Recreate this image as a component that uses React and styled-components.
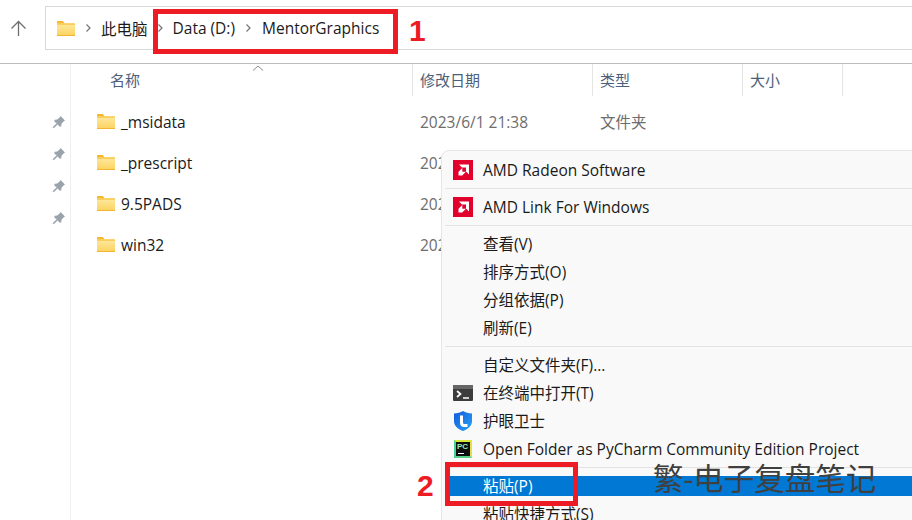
import React from 'react';
import styled, {createGlobalStyle} from 'styled-components';

const UI_FONT = `"Open Sans", "Noto Sans CJK SC", sans-serif`;

const GlobalStyle = createGlobalStyle`
  html, body {
    margin: 0;
    padding: 0;
    background: #fff;
  }
  body {
    font-family: ${UI_FONT};
  }
`;

const Page = styled.div`
  position: relative;
  width: 912px;
  height: 520px;
  overflow: hidden;
  background: #fff;
  color: #1a1a1a;
`;

const Toolbar = styled.div`
  display: flex;
  align-items: flex-start;
  height: 64px;
  box-sizing: border-box;
  padding: 6px 0 0 10px;
  border-bottom: 1px solid #bdbdbd;
`;

const BackButton = styled.div`
  display: flex;
  width: 35px;
  flex: none;
  margin-top: 14px;
`;

const AddressBar = styled.div`
  display: flex;
  align-items: center;
  flex: 1;
  height: 44px;
  box-sizing: border-box;
  padding-left: 11px;
  border: 1px solid #d9d9d9;
  border-right: 0;
  font-size: 15.5px;
`;

const Crumb = styled.span`
  margin-right: ${p => p.$gap || 0}px;
  white-space: nowrap;
`;

const AddressFolder = styled.span`
  display: flex;
  margin-right: 10px;
`;

const Chevron = styled.svg`
  width: 6px;
  height: 10px;
  flex: none;
  margin-right: ${p => p.$gap}px;
`;

const Body = styled.div`
  display: flex;
  height: 456px;
`;

const NavRail = styled.div`
  display: flex;
  flex-direction: column;
  align-items: center;
  gap: 16px;
  width: 71px;
  box-sizing: border-box;
  padding: 50px 0 0 47px;
  border-right: 1px solid #f0f0f0;
`;

const FileArea = styled.div`
  flex: 1;
`;

const HeaderRow = styled.div`
  display: grid;
  grid-template-columns: 342px 180px 150px 100px 1fr;
  height: 32px;
`;

const HeaderCell = styled.div`
  position: relative;
  display: flex;
  align-items: center;
  box-sizing: border-box;
  padding: 0 0 2px ${p => p.$pad || 7}px;
  border-right: 1px solid #e5e5e5;
  font-size: 15px;
  color: #4c607a;
  &:last-child {
    border-right: 0;
  }
`;

const SortCaret = styled.svg`
  position: absolute;
  left: 181px;
  top: 1px;
  width: 12px;
  height: 6px;
`;

const FileList = styled.div`
  padding-top: 5px;
`;

const FileRow = styled.div`
  display: grid;
  grid-template-columns: 342px 180px 150px;
  align-items: center;
  height: 41px;
`;

const FileName = styled.div`
  display: flex;
  align-items: center;
  gap: 6px;
  padding-left: 26px;
  font-size: 15.5px;
  color: #1a1a1a;
`;

const FileMeta = styled.div`
  padding-left: 7px;
  font-size: 15.5px;
  color: #6d6d6d;
  white-space: nowrap;
`;

const Menu = styled.div`
  position: absolute;
  left: 441px;
  top: 150px;
  width: 480px;
  height: 380px;
  box-sizing: border-box;
  padding-top: 1px;
  background: #f9f9f9;
  border: 1px solid #e6e6e6;
  border-radius: 8px 0 0 0;
  font-size: 15.5px;
  color: #1a1a1a;
`;

const MenuItem = styled.div`
  display: flex;
  align-items: center;
  height: ${p => p.$h || 28}px;
  padding-left: 11px;
`;

const ActiveItem = styled(MenuItem)`
  height: 20px;
  margin: 8px 0 3px 8px;
  padding-left: 3px;
  background: #0078d4;
  color: #fff;
`;

const MenuIcon = styled.div`
  display: flex;
  align-items: center;
  justify-content: center;
  width: 20px;
  height: 20px;
  flex: none;
  margin-right: 10px;
`;

const MenuSpacer = styled.div`
  width: 20px;
  flex: none;
  margin-right: 10px;
`;

const MenuLabel = styled.span`
  white-space: nowrap;
  margin-bottom: ${p => (p.$lift ? 2 : 0)}px;
`;

const Divider = styled.div`
  height: 1px;
  margin: ${p => p.$top}px 0 ${p => p.$bottom}px 3px;
  background: #e3e3e3;
`;

const PcIcon = styled.div`
  position: relative;
  width: 18px;
  height: 18px;
  box-sizing: border-box;
  border: 2px solid;
  border-color: #d7e83a #e5e04a #57d08a #3ed49c;
  background: #0d0d0d;
  color: #8ef0b8;
  font: 700 8px/9px "Liberation Sans", sans-serif;
  padding-left: 1px;
  &::after {
    content: '';
    position: absolute;
    left: 2px;
    bottom: 2px;
    width: 6px;
    height: 1px;
    background: #fff;
  }
`;

const RedBox = styled.div`
  position: absolute;
  left: ${p => p.$x}px;
  top: ${p => p.$y}px;
  width: ${p => p.$w}px;
  height: ${p => p.$h}px;
  box-sizing: border-box;
  border: 5px solid #ed1c24;
`;

const RedNumber = styled.div`
  position: absolute;
  left: ${p => p.$x}px;
  top: ${p => p.$y}px;
  font: 700 30px/34px "Liberation Sans", sans-serif;
  color: #ed1c24;
`;

const Watermark = styled.div`
  position: absolute;
  left: 653px;
  top: 460px;
  font-size: 30.5px;
  line-height: 36px;
  color: #404040;
  white-space: nowrap;
`;

const Folder = ({id}) => (
  <svg width="18" height="15" viewBox="0 0 18 15">
    <defs>
      <linearGradient id={id} x1="0" y1="0" x2="0" y2="1">
        <stop offset="0" stopColor="#ffe9a0" />
        <stop offset="1" stopColor="#fbd25f" />
      </linearGradient>
    </defs>
    <path d="M0 1.2C0 .5.5 0 1.2 0h4.600l2 2.400H0z" fill="#f5b82a" />
    <path d="M0 2.400h17c.6 0 1 .4 1 1V14c0 .6-.4 1-1 1H1c-.6 0-1-.4-1-1z" fill={`url(#${id})`} />
    <path d="M0 2.400h18v1.200H0z" fill="#f7bf35" />
    <path d="M0 14h18v1H0z" fill="#f2b431" />
  </svg>
);

const Pin = () => (
  <svg width="16" height="16" viewBox="0 0 16 16">
    <path d="M9.500 2 14 6.500 12.800 7.200 10.500 9.700 10.300 12.200 8.800 12.800 3.200 7.200 3.800 5.700 6.300 5.500 8.800 3.200z" fill="#9aa3ad" />
    <path d="M6 10 2.200 13.800" stroke="#9aa3ad" strokeWidth="1.600" />
  </svg>
);

const Chev = ({gap}) => (
  <Chevron $gap={gap} viewBox="0 0 6 10">
    <path d="M1.500 1.500l3.500 3.500-3.500 3.500" fill="none" stroke="#7a7a7a" strokeWidth="1.300" />
  </Chevron>
);

const AmdIcon = () => (
  <svg width="20" height="20" viewBox="0 0 20 20">
    <rect width="20" height="20" fill="#e2002d" />
    <path d="M6 4.500H16V14.500L13 11.500V7.500H9z" fill="#fff" />
    <path d="M9.300 8 5.500 11.800V15.500H9.200L13 11.800H9.300z" fill="#fff" />
  </svg>
);

const TerminalIcon = () => (
  <svg width="20" height="16" viewBox="0 0 20 16">
    <rect width="20" height="16" rx="1" fill="#3c3c3c" />
    <rect width="20" height="4" fill="#666" />
    <path d="M4 6l3.500 3-3.500 3" fill="none" stroke="#fff" strokeWidth="1.700" />
    <path d="M10 13h6" stroke="#fff" strokeWidth="1.500" />
  </svg>
);

const ShieldIcon = () => (
  <svg width="18" height="20" viewBox="0 0 18 20">
    <defs>
      <linearGradient id="shield" x1="0" y1="0" x2="1" y2="1">
        <stop offset="0" stopColor="#1259dc" />
        <stop offset="1" stopColor="#2aa2f2" />
      </linearGradient>
    </defs>
    <path d="M9 0c2.600 1.600 5.400 2.400 9 2.600V10c0 4.600-3.600 8-9 10-5.400-2-9-5.400-9-10V2.600C3.600 2.400 6.400 1.600 9 0z" fill="url(#shield)" />
    <path d="M7.500 4.500v7c0 1.800 1.200 3 3 3h3" fill="none" stroke="#fff" strokeWidth="3" />
  </svg>
);

const files = [
  {name: '_msidata', date: '2023/6/1 21:38', type: '文件夹'},
  {name: '_prescript', date: '2023/6/1 21:38', type: ''},
  {name: '9.5PADS', date: '2023/6/1 21:38', type: ''},
  {name: 'win32', date: '2023/6/1 21:38', type: ''}
];

const App = () => (
  <Page>
    <GlobalStyle />
    <Toolbar>
      <BackButton>
        <svg width="17" height="17" viewBox="0 0 17 17">
          <path d="M8.500 16V1.500M1.500 8.500l7-7 7 7" fill="none" stroke="#6e6e6e" strokeWidth="1.300" />
        </svg>
      </BackButton>
      <AddressBar>
        <AddressFolder><Folder id="addr" /></AddressFolder>
        <Chev gap={10} />
        <Crumb $gap={9}>此电脑</Crumb>
        <Chev gap={10} />
        <Crumb $gap={10}>Data (D:)</Crumb>
        <Chev gap={11} />
        <Crumb>MentorGraphics</Crumb>
      </AddressBar>
    </Toolbar>
    <Body>
      <NavRail>
        <Pin /><Pin /><Pin /><Pin />
      </NavRail>
      <FileArea>
        <HeaderRow>
          <HeaderCell $pad={39}>
            名称
            <SortCaret viewBox="0 0 12 6">
              <path d="M1 5.500l5-4.500 5 4.500" fill="none" stroke="#8a8a8a" />
            </SortCaret>
          </HeaderCell>
          <HeaderCell>修改日期</HeaderCell>
          <HeaderCell>类型</HeaderCell>
          <HeaderCell>大小</HeaderCell>
          <HeaderCell />
        </HeaderRow>
        <FileList>
          {files.map((f, i) => (
            <FileRow key={f.name}>
              <FileName><Folder id={`row${i}`} />{f.name}</FileName>
              <FileMeta>{f.date}</FileMeta>
              <FileMeta>{f.type}</FileMeta>
            </FileRow>
          ))}
        </FileList>
      </FileArea>
    </Body>

    <Menu>
      <MenuItem $h={36}><MenuIcon><AmdIcon /></MenuIcon><MenuLabel>AMD Radeon Software</MenuLabel></MenuItem>
      <Divider $top={0} $bottom={0} />
      <MenuItem $h={36}><MenuIcon><AmdIcon /></MenuIcon><MenuLabel>AMD Link For Windows</MenuLabel></MenuItem>
      <Divider $top={0} $bottom={4} />
      <MenuItem><MenuSpacer /><MenuLabel $lift>查看(V)</MenuLabel></MenuItem>
      <MenuItem><MenuSpacer /><MenuLabel $lift>排序方式(O)</MenuLabel></MenuItem>
      <MenuItem><MenuSpacer /><MenuLabel $lift>分组依据(P)</MenuLabel></MenuItem>
      <MenuItem><MenuSpacer /><MenuLabel $lift>刷新(E)</MenuLabel></MenuItem>
      <Divider $top={4} $bottom={4} />
      <MenuItem><MenuSpacer /><MenuLabel $lift>自定义文件夹(F)...</MenuLabel></MenuItem>
      <MenuItem><MenuIcon><TerminalIcon /></MenuIcon><MenuLabel $lift>在终端中打开(T)</MenuLabel></MenuItem>
      <MenuItem><MenuIcon><ShieldIcon /></MenuIcon><MenuLabel $lift>护眼卫士</MenuLabel></MenuItem>
      <MenuItem><MenuIcon><PcIcon>PC</PcIcon></MenuIcon><MenuLabel>Open Folder as PyCharm Community Edition Project</MenuLabel></MenuItem>
      <Divider $top={4} $bottom={0} />
      <ActiveItem><MenuSpacer /><MenuLabel $lift>粘贴(P)</MenuLabel></ActiveItem>
      <MenuItem><MenuSpacer /><MenuLabel>粘贴快捷方式(S)</MenuLabel></MenuItem>
    </Menu>

    <RedBox $x={153} $y={9} $w={245} $h={45} />
    <RedNumber $x={409} $y={14}>1</RedNumber>
    <RedBox $x={445} $y={462} $w={133} $h={44} />
    <RedNumber $x={417} $y={469}>2</RedNumber>
    <Watermark>繁-电子复盘笔记</Watermark>
  </Page>
);

export default App;
